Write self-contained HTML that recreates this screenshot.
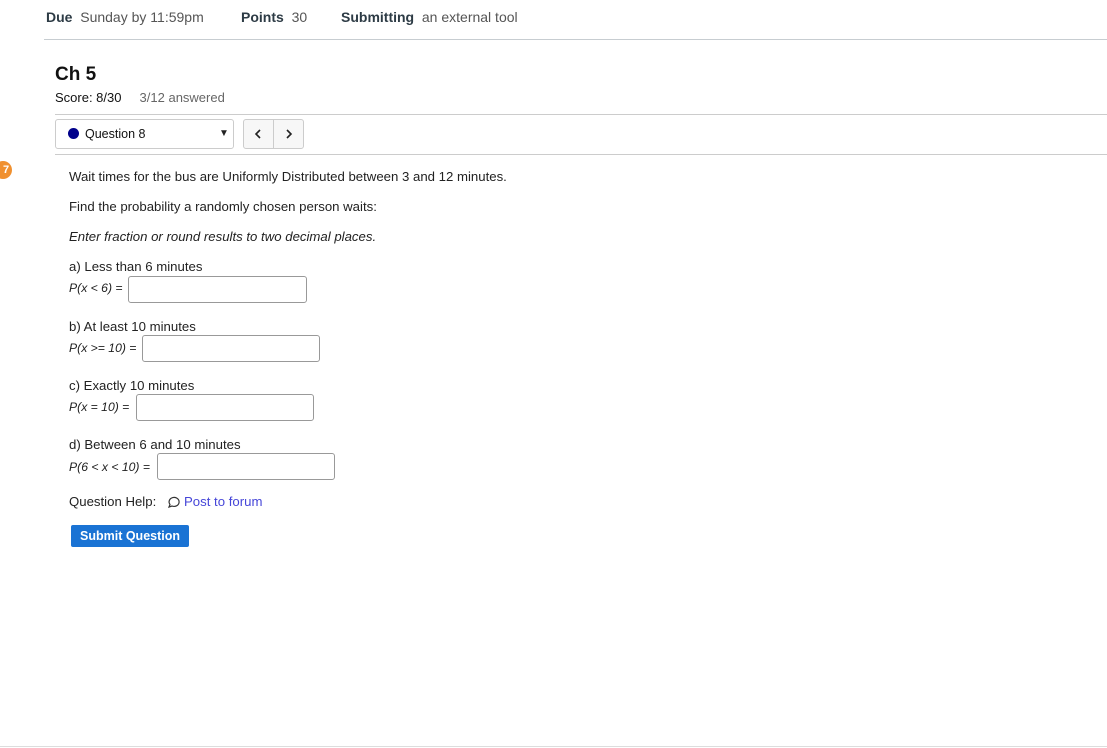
<!DOCTYPE html>
<html><head><style>
body{margin:0;width:1107px;height:748px;background:#fff;font-family:"Liberation Sans",sans-serif;color:#222;position:relative;overflow:hidden}
.a{position:absolute;white-space:nowrap}
.t{font-size:13.2px}
.in{position:absolute;height:25px;border:1px solid #999;border-radius:3px;box-sizing:border-box;background:#fff}
.i{font-style:italic;font-size:12.2px}
</style></head><body>
<div class="a" style="left:46px;top:9px;font-size:14px;color:#2d3b45"><b>Due</b>&nbsp; <span style="color:#555">Sunday by 11:59pm</span></div>
<div class="a" style="left:241px;top:9px;font-size:14px;color:#2d3b45"><b>Points</b>&nbsp; <span style="color:#555">30</span></div>
<div class="a" style="left:341px;top:9px;font-size:14px;color:#2d3b45"><b>Submitting</b>&nbsp; <span style="color:#555">an external tool</span></div>
<div class="a" style="left:44px;top:39px;width:1063px;height:1px;background:#c7cdd1"></div>
<div class="a" style="left:55px;top:64px;font-size:19px;font-weight:bold;color:#111">Ch 5</div>
<div class="a" style="left:55px;top:90px;color:#111;font-size:13px">Score: 8/30 &nbsp;&nbsp;&nbsp; <span style="color:#666">3/12 answered</span></div>
<div class="a" style="left:55px;top:114px;width:1052px;height:1px;background:#ccc"></div>
<div class="a" style="left:55px;top:119px;width:179px;height:30px;border:1px solid #ccc;border-radius:3px;box-sizing:border-box"></div>
<div class="a" style="left:68px;top:128px;width:11px;height:11px;border-radius:50%;background:#00008b"></div>
<div class="a" style="left:85px;top:127px;color:#111;font-size:12.5px">Question 8</div>
<div class="a" style="left:219px;top:128px;font-size:10px">▼</div>
<div class="a" style="left:243px;top:119px;width:61px;height:30px;border:1px solid #ccc;border-radius:3px;box-sizing:border-box;background:#f7f7f7"></div>
<div class="a" style="left:273px;top:119px;width:1px;height:30px;background:#ccc"></div>
<svg class="a" style="left:254px;top:129px" width="8" height="10"><path d="M6 1 L2 5 L6 9" fill="none" stroke="#222" stroke-width="1.6"/></svg>
<svg class="a" style="left:285px;top:129px" width="8" height="10"><path d="M2 1 L6 5 L2 9" fill="none" stroke="#222" stroke-width="1.6"/></svg>
<div class="a" style="left:55px;top:154px;width:1052px;height:1px;background:#ccc"></div>
<div class="a" style="left:-6px;top:161px;width:18px;height:18px;border-radius:50%;background:#f0902f;color:#fff;font-size:11px;font-weight:bold;text-align:center;line-height:18px">&nbsp;&nbsp;7</div>
<div class="a t" style="left:69px;top:169px">Wait times for the bus are Uniformly Distributed between 3 and 12 minutes.</div>
<div class="a t" style="left:69px;top:199px">Find the probability a randomly chosen person waits:</div>
<div class="a t" style="left:69px;top:229px;font-style:italic">Enter fraction or round results to two decimal places.</div>
<div class="a t" style="left:69px;top:259px">a) Less than 6 minutes</div>
<div class="a i" style="left:69px;top:281px">P(x &lt; 6) =</div>
<div class="in" style="left:128px;top:276px;width:179px;height:27px"></div>
<div class="a t" style="left:69px;top:319px">b) At least 10 minutes</div>
<div class="a i" style="left:69px;top:341px">P(x &gt;= 10) =</div>
<div class="in" style="left:142px;top:335px;width:178px;height:27px"></div>
<div class="a t" style="left:69px;top:378px">c) Exactly 10 minutes</div>
<div class="a i" style="left:69px;top:400px">P(x = 10) =</div>
<div class="in" style="left:136px;top:394px;width:178px;height:27px"></div>
<div class="a t" style="left:69px;top:437px">d) Between 6 and 10 minutes</div>
<div class="a i" style="left:69px;top:460px">P(6 &lt; x &lt; 10) =</div>
<div class="in" style="left:157px;top:453px;width:178px;height:27px"></div>
<div class="a t" style="left:69px;top:494px">Question Help:</div>
<svg class="a" style="left:166px;top:495px" width="14" height="14" viewBox="0 0 14 14"><path d="M3 12 L4 9.5 A5 4.5 0 1 1 6 11 Z" fill="none" stroke="#333" stroke-width="1.2"/></svg>
<div class="a t" style="left:184px;top:494px;color:#4646d8">Post to forum</div>
<div class="a" style="left:71px;top:525px;width:118px;height:22px;background:#1a73d4;border-radius:2px;color:#fff;font-size:12.5px;font-weight:bold;text-align:center;line-height:22px">Submit Question</div>
<div class="a" style="left:0;top:746px;width:1107px;height:1px;background:#ddd"></div>
</body></html>
